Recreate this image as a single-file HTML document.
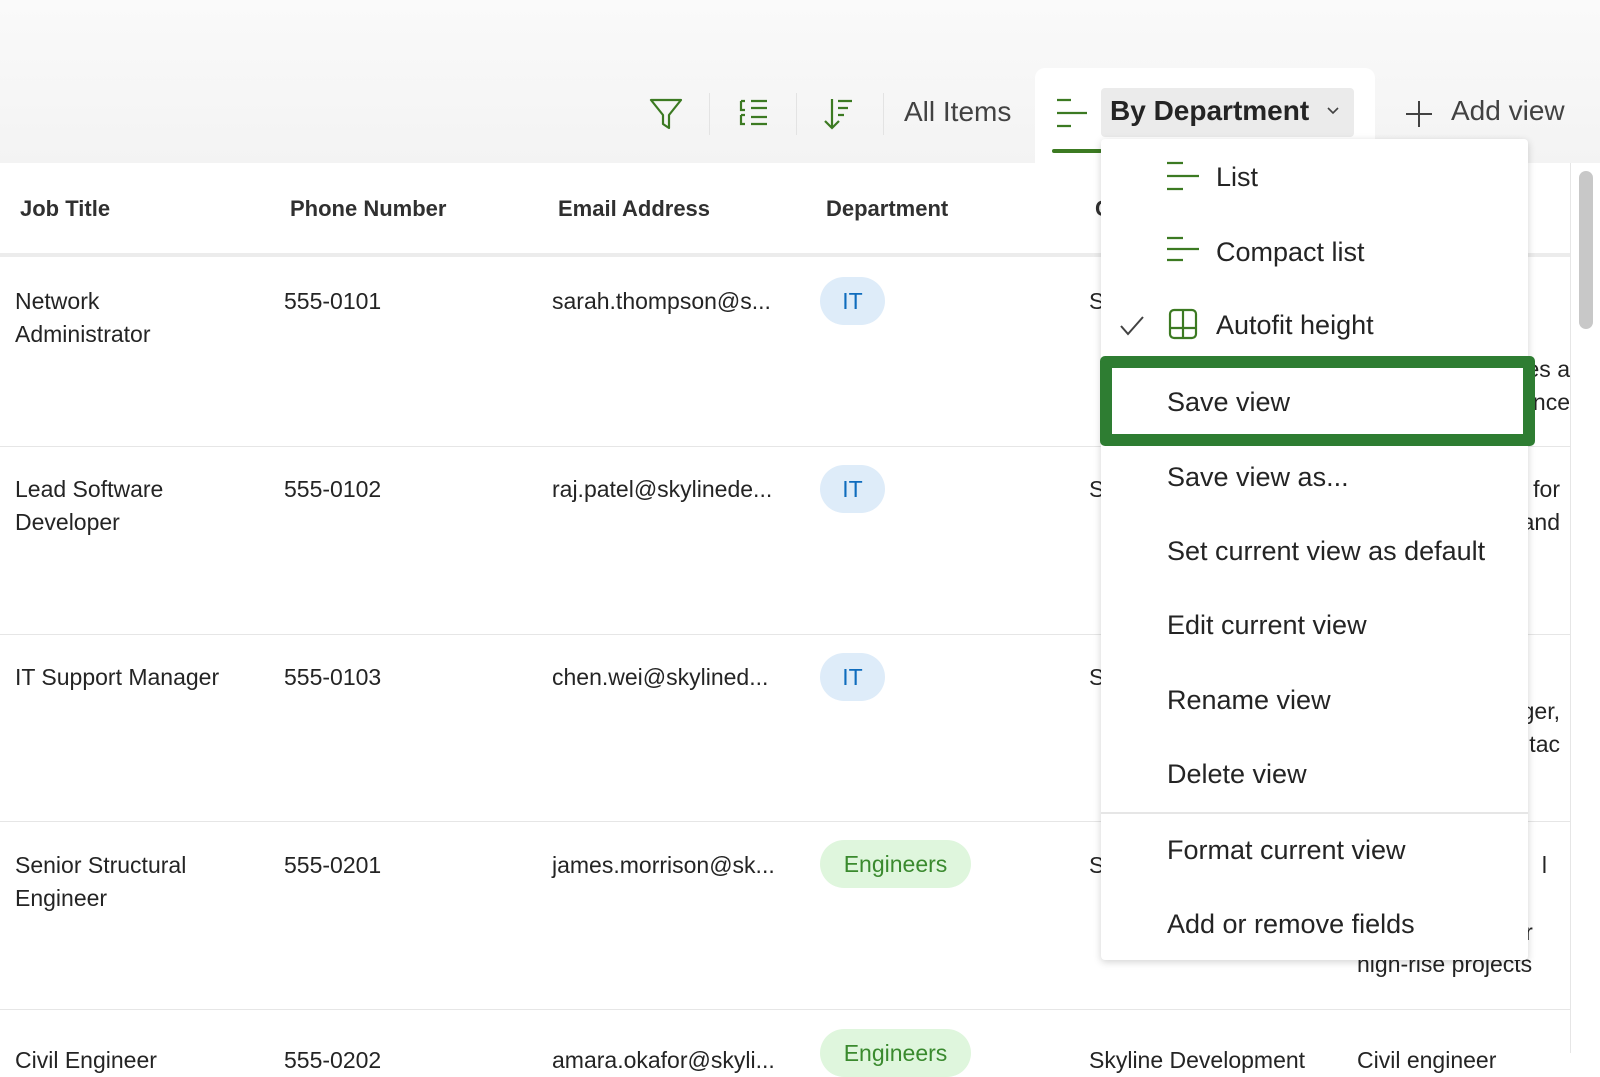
<!DOCTYPE html>
<html><head><meta charset="utf-8"><style>
*{margin:0;padding:0;box-sizing:border-box}
body{width:1600px;height:1053px;overflow:hidden;background:#fff;font-family:"Liberation Sans",sans-serif;color:#242424;position:relative}
.a{position:absolute;white-space:nowrap}
.top{position:absolute;left:0;top:0;width:1600px;height:163px;background:linear-gradient(#fafafa,#f3f3f3)}
.sep{position:absolute;top:93px;width:1px;height:42px;background:#e3e3e3}
.t{font-size:23px;line-height:33px}
.h{font-size:22px;font-weight:bold;top:196px;color:#303030}
.row{position:absolute;left:0;width:1570px;height:1px;background:#e6e6e6}
.badge{position:absolute;height:48px;border-radius:24px;font-size:23px;line-height:48px;text-align:center}
.it{background:#deecf9;color:#0f6cbd;width:65px}
.en{background:#dff6dd;color:#3a8a2e;width:151px}
.menu{position:absolute;left:1101px;top:139px;width:427px;height:821px;background:#fff;box-shadow:0 2px 8px rgba(0,0,0,.18);border-radius:4px}
.mi{position:absolute;font-size:27px;line-height:36px;color:#242424;white-space:nowrap}
</style></head><body>
<div class="top"></div>
<div class="a" style="left:1035px;top:68px;width:340px;height:100px;background:#fff;border-radius:10px 10px 0 0"></div>
<svg class="a" style="left:648px;top:96px" width="36" height="36" viewBox="0 0 36 36" fill="none" stroke="#3c7a22" stroke-width="2.2" stroke-linejoin="round"><path d="M3 4h30L21 19v13l-6-4V19z"/></svg>
<div class="sep" style="left:709px"></div>
<svg class="a" style="left:737px;top:98px" width="34" height="32" viewBox="0 0 34 32" fill="none" stroke="#3c7a22" stroke-width="2.2"><path d="M4 3h4M4 3v9h4M14 3h16M14 10h16M4 17h4M4 17v9h4M14 19h16M14 26h16"/></svg>
<div class="sep" style="left:796px"></div>
<svg class="a" style="left:822px;top:96px" width="34" height="36" viewBox="0 0 34 36" fill="none" stroke="#3c7a22" stroke-width="2.2"><path d="M10 3v29M3 25l7 7 7-7M16 5h14M16 12h10M16 19h6"/></svg>
<div class="sep" style="left:883px"></div>
<div class="a" style="left:904px;top:96px;font-size:28px;color:#424242">All Items</div>
<svg class="a" style="left:1055px;top:96px" width="34" height="34" viewBox="0 0 34 34" stroke="#3c7a22" stroke-width="2.2"><path d="M2 4h14M2 17h30M2 30h14"/></svg>
<div class="a" style="left:1052px;top:149px;width:50px;height:4px;background:#3c7a22;border-radius:2px"></div>
<div class="a" style="left:1101px;top:88px;width:253px;height:49px;background:#ebebeb;border-radius:4px"></div>
<div class="a" style="left:1110px;top:95px;font-size:28px;font-weight:bold;color:#242424">By Department</div>
<svg class="a" style="left:1326px;top:106px" width="14" height="10" viewBox="0 0 14 10" fill="none" stroke="#424242" stroke-width="1.6"><path d="M2 2l5 5 5-5"/></svg>
<svg class="a" style="left:1404px;top:99px" width="30" height="30" viewBox="0 0 30 30" stroke="#424242" stroke-width="2"><path d="M15 2v26M2 15h26"/></svg>
<div class="a" style="left:1451px;top:95px;font-size:28px;color:#424242">Add view</div>

<div class="a h" style="left:20px">Job Title</div>
<div class="a h" style="left:290px">Phone Number</div>
<div class="a h" style="left:558px">Email Address</div>
<div class="a h" style="left:826px">Department</div>
<div class="a h" style="left:1095px">C</div>
<div class="row" style="top:253px;height:4px;background:#ececec"></div>
<div class="row" style="top:446px"></div>
<div class="row" style="top:634px"></div>
<div class="row" style="top:821px"></div>
<div class="row" style="top:1009px"></div>
<div class="a" style="left:1570px;top:163px;width:1px;height:890px;background:#e6e6e6"></div>
<div class="a" style="left:1579px;top:171px;width:14px;height:158px;background:#c8c8c8;border-radius:7px"></div>

<div class="a t" style="left:15px;top:285px">Network<br>Administrator</div>
<div class="a t" style="left:284px;top:285px">555-0101</div>
<div class="a t" style="left:552px;top:285px">sarah.thompson@s...</div>
<div class="badge it" style="left:820px;top:277px">IT</div>
<div class="a t" style="left:1089px;top:285px">S</div>

<div class="a t" style="left:15px;top:473px">Lead Software<br>Developer</div>
<div class="a t" style="left:284px;top:473px">555-0102</div>
<div class="a t" style="left:552px;top:473px">raj.patel@skylinede...</div>
<div class="badge it" style="left:820px;top:465px">IT</div>
<div class="a t" style="left:1089px;top:473px">S</div>

<div class="a t" style="left:15px;top:661px">IT Support Manager</div>
<div class="a t" style="left:284px;top:661px">555-0103</div>
<div class="a t" style="left:552px;top:661px">chen.wei@skylined...</div>
<div class="badge it" style="left:820px;top:653px">IT</div>
<div class="a t" style="left:1089px;top:661px">S</div>

<div class="a t" style="left:15px;top:849px">Senior Structural<br>Engineer</div>
<div class="a t" style="left:284px;top:849px">555-0201</div>
<div class="a t" style="left:552px;top:849px">james.morrison@sk...</div>
<div class="badge en" style="left:820px;top:840px">Engineers</div>
<div class="a t" style="left:1089px;top:849px">S</div>

<div class="a t" style="left:15px;top:1044px">Civil Engineer</div>
<div class="a t" style="left:284px;top:1044px">555-0202</div>
<div class="a t" style="left:552px;top:1044px">amara.okafor@skyli...</div>
<div class="badge en" style="left:820px;top:1029px">Engineers</div>
<div class="a t" style="left:1089px;top:1044px">Skyline Development</div>
<div class="a t" style="left:1357px;top:1044px">Civil engineer</div>

<div class="a t" style="left:1357px;top:353px;width:213px;overflow:hidden;text-align:right">es a<br>nce</div>
<div class="a t" style="left:1357px;top:473px;width:213px;overflow:hidden;text-align:right;padding-right:10px">for<br>s and</div>
<div class="a t" style="left:1357px;top:695px;width:213px;overflow:hidden;text-align:right;padding-right:10px">ger,<br>ntac</div>
<div class="a t" style="left:1357px;top:849px;width:210px;text-align:right;padding-right:20px">l</div>
<div class="a t" style="left:1357px;top:948px">high-rise projects</div>
<div class="a t" style="left:1506px;top:916px">for</div>

<div class="menu">
<svg class="a" style="left:65px;top:22px" width="34" height="30" viewBox="0 0 34 30" stroke="#3c7a22" stroke-width="2.2"><path d="M1 2h16M1 15h32M1 28h16"/></svg>
<div class="mi" style="left:115px;top:20px">List</div>
<svg class="a" style="left:65px;top:97px" width="34" height="28" viewBox="0 0 34 28" stroke="#3c7a22" stroke-width="2.2"><path d="M1 2h16M1 13h32M1 24h16"/></svg>
<div class="mi" style="left:115px;top:95px">Compact list</div>
<svg class="a" style="left:18px;top:176px" width="26" height="22" viewBox="0 0 26 22" fill="none" stroke="#424242" stroke-width="2"><path d="M2 11l7 8L24 2"/></svg>
<svg class="a" style="left:67px;top:169px" width="30" height="32" viewBox="0 0 30 32" fill="none" stroke="#3c7a22" stroke-width="2.2"><rect x="2" y="2" width="26" height="28" rx="4"/><path d="M15 2v28M2 20h26"/></svg>
<div class="mi" style="left:115px;top:168px">Autofit height</div>
<div class="mi" style="left:66px;top:245px">Save view</div>
<div class="mi" style="left:66px;top:320px">Save view as...</div>
<div class="mi" style="left:66px;top:394px">Set current view as default</div>
<div class="mi" style="left:66px;top:468px">Edit current view</div>
<div class="mi" style="left:66px;top:543px">Rename view</div>
<div class="mi" style="left:66px;top:617px">Delete view</div>
<div class="a" style="left:0;top:673px;width:427px;height:2px;background:#e6e6e6"></div>
<div class="mi" style="left:66px;top:693px">Format current view</div>
<div class="mi" style="left:66px;top:767px">Add or remove fields</div>
</div>
<div class="a" style="left:1100px;top:356px;width:435px;height:90px;border:12px solid #2e7d32;border-radius:5px"></div>
</body></html>
